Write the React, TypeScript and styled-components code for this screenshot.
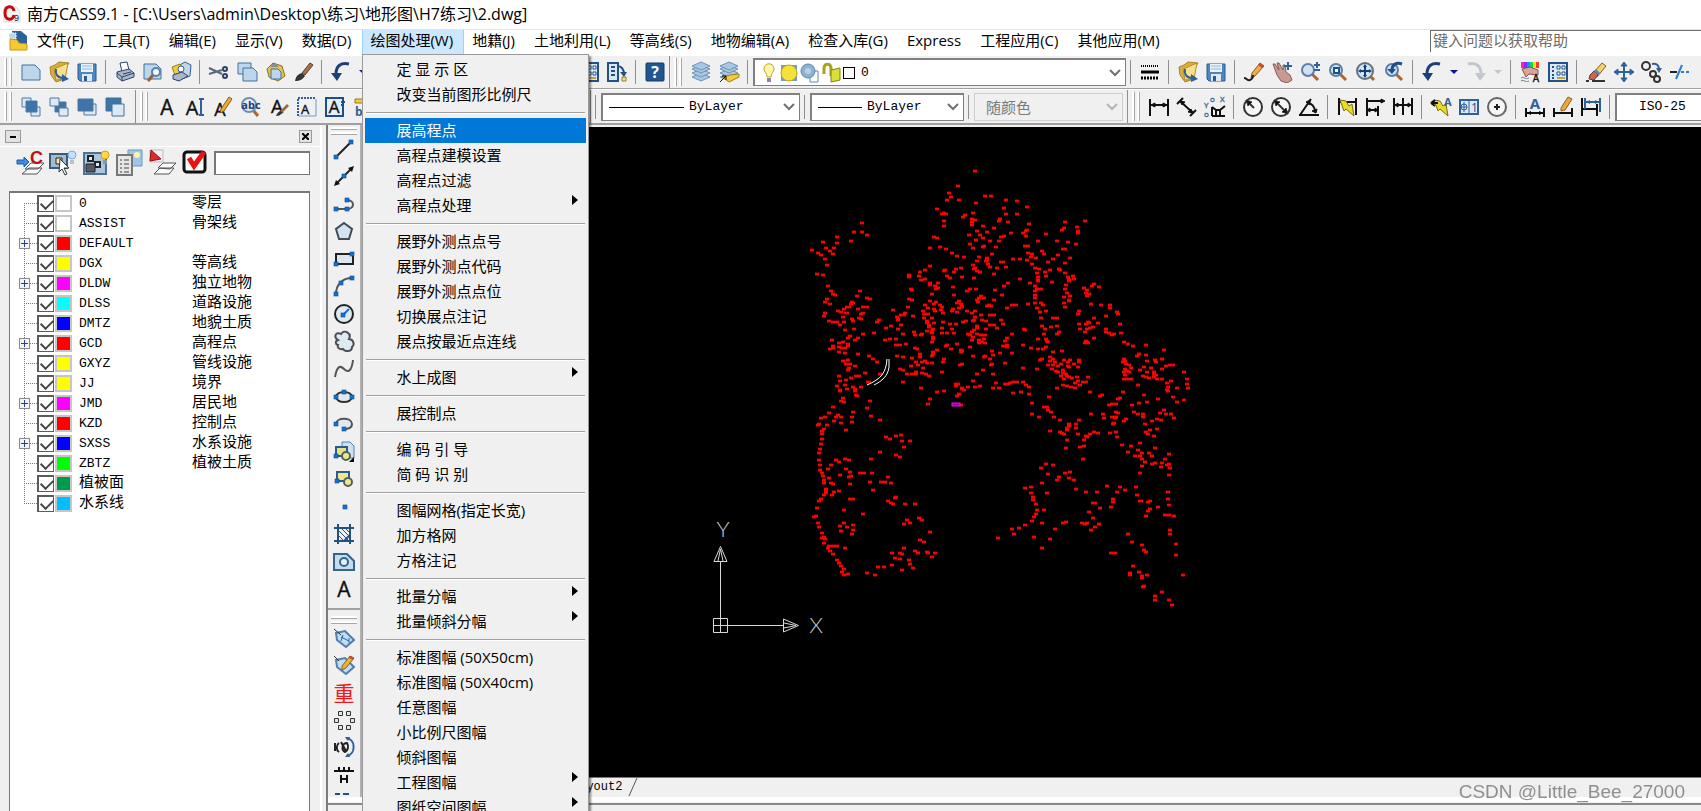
import React from 'react';
import styled, { createGlobalStyle } from 'styled-components';

const UI_FONT = '"Open Sans", "Noto Sans CJK SC", sans-serif';
const MONO_FONT = '"Liberation Mono", "Noto Sans CJK SC", monospace';

const GlobalStyle = createGlobalStyle`
  * { box-sizing: border-box; }
  html, body { margin: 0; padding: 0; overflow: hidden; }
  button, input, select { font: inherit; color: inherit; margin: 0; }
`;

/* ---------- icon drawings ---------- */

const INK = '#2d4266';
const BLUE = '#2f6099';
const PALE = '#bcd6ec';

const sheet = (
  <path d="M2 4h13l5 5v10H2z" fill={PALE} stroke="#41719f" />
);
const diskette = (
  <g>
    <path d="M2 3h18v17H4l-2-2z" fill="#4e86c0" stroke="#2c5b92" />
    <path d="M5 3h12v8H5z" fill="#eaf3fa" />
    <path d="M6 5h10M6 8h10" stroke="#8fb4d6" />
    <path d="M6 13h10v7H6z" fill="#dfe9f2" />
    <path d="M8 15h3v5H8z" fill="#2c5b92" />
  </g>
);
const folder = (
  <g>
    <path d="M2 6l5-2 4-3 10 1-2 3-5 14-6 2-5-7z" fill="#d9ae3c" stroke="#a9822a" />
    <path d="M6 8l14-6-3 16-9 1z" fill="#f8e08a" stroke="#b68d2c" />
    <path d="M8 8c-1 6 2 9 8 9" fill="none" stroke={BLUE} strokeWidth="2" />
    <path d="M14 13l7 5-7 3z" fill={BLUE} />
  </g>
);
const lens = (
  <g>
    <path d="M13 13l6 6" stroke="#b2642a" strokeWidth="3" />
    <circle cx="9" cy="9" r="6" fill="#cfe2f4" stroke="#5c7fa6" strokeWidth="2" />
  </g>
);
const undo = (
  <g>
    <path d="M19 3C11 1 6 5 6 13" fill="none" stroke="#1d3f78" strokeWidth="3" />
    <path d="M1 12h11l-5 8z" fill="#1d3f78" />
  </g>
);
const redo = (
  <g>
    <path d="M3 3c8-2 13 2 13 10" fill="none" stroke="#c3c7cc" strokeWidth="3" />
    <path d="M10 12h11l-6 8z" fill="#c3c7cc" />
  </g>
);
const stack = (
  <g stroke="#6d93b8" fill="#a9c6e2">
    <path d="M2 16l9-4 9 4-9 4z" />
    <path d="M2 12l9-4 9 4-9 4z" />
    <path d="M2 8l9-4 9 4-9 4z" />
    <path d="M2 5l9-4 9 4-9 4z" />
  </g>
);
const pencil = (
  <g>
    <path d="M9 12L17 2l4 3-9 10-4 2z" fill="#f0a94b" stroke="#8f5a20" />
    <path d="M17 2l4 3-2 2-4-3z" fill="#c64a36" />
  </g>
);
const bolt = <path d="M4 4l6 1 3 5 3-2 2 12-8-7-2 2z" fill="#e8dc29" stroke="#746d11" />;
const calcPad = (
  <g>
    <path d="M2 2h18v18H2z" fill="#d8e8f5" stroke="#245083" strokeWidth="2" />
    <path d="M5 6h2M5 10h2M5 14h2M5 17h2" stroke="#245083" strokeWidth="2" />
    <path d="M10 5h3v3h-3zM15 5h3v3h-3zM10 11h3v3h-3zM15 11h3v3h-3z" fill="#fff" stroke="#245083" />
    <path d="M10 17h8" stroke="#caa42e" strokeWidth="2" />
  </g>
);
const letterA = (size: number, x = 11, y = 19) => (
  <text x={x} y={y} textAnchor="middle" fontSize={size} fontFamily="Open Sans, sans-serif" fill="#111" stroke="#111" strokeWidth=".4">A</text>
);
const node = (x: number, y: number) => (
  <rect key={`${x}-${y}`} x={x - 2} y={y - 2} width="4" height="4" fill="#1173cf" stroke="#0b4d92" strokeWidth=".6" />
);
const twoSquares = (frontFill: string, backFill: string, flip: boolean) => (
  <g stroke="#41719f">
    <path d={flip ? 'M2 2h15v13H2z' : 'M2 2h10v10H2z'} fill={backFill} />
    <path d={flip ? 'M8 8h12v12H8z' : 'M6 6h11v11H6z'} fill={frontFill} />
  </g>
);

const icons: Record<string, React.ReactNode> = {
  sheet,
  diskette,
  folder,
  undo,
  redo,
  printer: (
    <g stroke={INK}>
      <path d="M6 2l7-1 2 8-7 2z" fill="#fff" />
      <path d="M3 11l12-3 5 4v4l-12 4-5-4z" fill="#a9b7cb" />
      <path d="M3 12l5 4 12-4M8 16v4" fill="none" />
      <path d="M9 13l8-2" />
    </g>
  ),
  preview: (
    <g>
      <path d="M2 3h12l5 5v10H2z" fill={PALE} stroke="#41719f" />
      <path d="M11 14l-5 6" stroke="#a65b26" strokeWidth="3" />
      <circle cx="14" cy="11" r="4" fill="#f1f8fd" stroke="#5c7fa6" strokeWidth="2" />
    </g>
  ),
  publish: (
    <g>
      <path d="M8 5l7-4 6 3-1 11-8 3z" fill="#c3d6e8" stroke={BLUE} />
      <path d="M2 6l8-3 3 7-8 4z" fill="#f2cc3a" stroke="#9e7919" />
      <circle cx="11" cy="8" r="3" fill="#fff" stroke={BLUE} />
      <path d="M3 14l9-3 6 4-9 5-6-2z" fill="#a9b7cb" stroke={INK} />
    </g>
  ),
  scissors: (
    <g stroke={INK} fill="none" strokeWidth="2">
      <path d="M1 7l13 6M1 13l13-4" stroke="#59697d" />
      <circle cx="17" cy="8" r="2" />
      <circle cx="17" cy="15" r="2" />
    </g>
  ),
  copy: (
    <g fill={PALE} stroke="#41719f">
      <path d="M2 2h13v11H2z" />
      <path d="M7 7h10l4 4v9H7z" />
    </g>
  ),
  paste: (
    <g>
      <path d="M3 8l6-6 9 3 3 10-7 5-9-4z" fill="#e3c254" stroke="#8d6f22" />
      <path d="M7 3h6l1 3H7z" fill="#8d8d8d" />
      <path d="M7 8h7l3 3v7H7z" fill={PALE} stroke="#41719f" />
    </g>
  ),
  brush: (
    <g>
      <path d="M10 12l8-10 3 2-8 10z" fill="#a6704b" stroke="#5d3c27" />
      <path d="M3 20c1-5 3-7 7-8l3 3c-2 3-5 5-10 5z" fill="#33333a" />
    </g>
  ),
  pad: calcPad,
  padDown: (
    <g>
      <path d="M2 2h10v18H2z" fill="#d8e8f5" stroke="#245083" strokeWidth="2" />
      <path d="M5 6h4M5 10h4M5 14h4" stroke="#245083" strokeWidth="2" />
      <path d="M11 5c5 0 7 3 7 9" fill="none" stroke="#245083" strokeWidth="2" />
      <path d="M14 11h7l-3 5z" fill="#245083" />
      <path d="M16 16h4v4h-4z" fill="#f5e18a" stroke="#9e7919" />
    </g>
  ),
  help: (
    <g>
      <rect x="2" y="2" width="18" height="18" rx="1" fill="#1f568f" stroke="#123a66" />
      <text x="11" y="17" textAnchor="middle" fontSize="16" fontWeight="700" fontFamily="Open Sans, sans-serif" fill="#fff">?</text>
    </g>
  ),
  layers: stack,
  layerPrev: (
    <g>
      {stack}
      <path d="M4 16l8-2 9-1v3l-10 5-4-3z" fill="#f0cc3b" stroke="#a37d1a" />
      <path d="M2 21l6-6M4 15h4v4" stroke="#111" fill="none" />
    </g>
  ),
  lineWeights: (
    <g stroke="#000">
      <path d="M2 5h18" strokeDasharray="1 1" strokeWidth="2" />
      <path d="M2 11h18" strokeWidth="3" />
      <path d="M2 17h18" strokeDasharray="2 1" strokeWidth="3" />
    </g>
  ),
  draw: (
    <g>
      {pencil}
      <path d="M1 17c3 0 3 3 6 2 3-1 3-3 3-5" fill="none" stroke="#222" strokeWidth="2" />
    </g>
  ),
  hand: (
    <g>
      <path d="M2 3l2 0 4 6-2-7 2 0 4 7 0-5 2 0 1 7 4 3 2 5-5 3-6-2-4-6z" fill="#c99a94" stroke="#8a5a57" />
      <path d="M17 1v8M13 5h8" stroke={BLUE} strokeWidth="2" />
    </g>
  ),
  zoomLive: (
    <g>
      {lens}
      <path d="M15 4h6M18 1v6M15 9h6" stroke={BLUE} strokeWidth="2" />
    </g>
  ),
  zoomWindow: (
    <g>
      {lens}
      <path d="M7 7h5v5H7z" fill="#fff" stroke="#1d4f8c" strokeWidth="2" />
    </g>
  ),
  zoomExtents: (
    <g>
      <path d="M14 14l5 5" stroke="#b2642a" strokeWidth="3" />
      <circle cx="10" cy="10" r="8" fill="#d4e3f1" stroke="#5f7284" strokeWidth="2" />
      <path d="M10 3l2 3h-4zM10 17l2-3h-4zM3 10l3-2v4zM17 10l-3-2v4z" fill="#123f78" />
      <path d="M10 5v10M5 10h10" stroke="#123f78" strokeWidth="2" />
    </g>
  ),
  zoomPrev: (
    <g>
      {lens}
      <path d="M19 3C13 1 9 4 9 9" fill="none" stroke="#1d4f8c" strokeWidth="3" />
      <path d="M4 8h9l-4 5z" fill="#1d4f8c" />
    </g>
  ),
  properties: (
    <g>
      <path d="M2 1h3v6H2z" fill="#ff1fb0" />
      <path d="M5 1h3v6H5z" fill="#8927ff" />
      <path d="M8 1h3v6H8z" fill="#1c8dff" />
      <path d="M11 1h3v6h-3z" fill="#13d84b" />
      <path d="M14 1h3v6h-3z" fill="#f2e21d" />
      <path d="M17 1h3v6h-3z" fill="#ff3b1d" />
      <path d="M3 8l8-2 8 3v5l-9-1-3 3z" fill="#d7a59a" stroke="#81564c" />
      <path d="M2 17c3-2 4 2 8 0M2 20c3-2 4 2 8 0" fill="none" stroke="#6d7f91" />
      {letterA(10, 17, 21)}
    </g>
  ),
  eraser: (
    <g>
      <path d="M8 12l9-10 4 3-9 11z" fill="#f3d368" stroke="#7c6220" />
      <path d="M5 14l4-4 4 4-4 5-5-1z" fill="#c46855" stroke="#733" />
      <path d="M10 9l4 4" stroke="#5e86b5" strokeWidth="3" />
      <path d="M1 20h3M7 20h13" stroke="#333" strokeWidth="2" />
    </g>
  ),
  move: (
    <g fill="#2f6099" stroke="#2f6099">
      <path d="M11 3v16M3 11h16" strokeWidth="2" />
      <path d="M11 1l3 4H8zM11 21l3-4H8zM1 11l4-3v6zM21 11l-4-3v6z" />
    </g>
  ),
  duplicate: (
    <g fill="none" stroke="#333" strokeWidth="2">
      <circle cx="5" cy="5" r="4" />
      <circle cx="12" cy="13" r="3" />
      <circle cx="16" cy="18" r="3" />
      <path d="M11 3c5-1 7 2 7 5" stroke={BLUE} />
      <path d="M15 7h6l-3 5z" fill={BLUE} stroke="none" />
    </g>
  ),
  trim: (
    <g fill="none">
      <path d="M1 11h7" stroke="#222" strokeWidth="2" />
      <path d="M7 18L13 4" stroke="#2b7fcf" strokeWidth="2" />
      <path d="M12 11h10" stroke="#2b7fcf" strokeWidth="2" strokeDasharray="3 2" />
    </g>
  ),
  orderFront: (
    <g stroke="#4d78a3">
      <path d="M2 2h9v9H2z" fill="#dbe9f5" />
      <path d="M11 11h9v9h-9z" fill="#dbe9f5" />
      <path d="M6 5h11v11H6z" fill="#3f74a9" />
    </g>
  ),
  orderBack: (
    <g stroke="#4d78a3">
      <path d="M7 6h11v10H7z" fill="#3f74a9" />
      <path d="M2 2h9v8H2z" fill="#dbe9f5" />
      <path d="M11 12h9v8h-9z" fill="#dbe9f5" />
    </g>
  ),
  orderAbove: (
    <g stroke="#4d78a3">
      <path d="M8 8h12v11H8z" fill="#dbe9f5" />
      <path d="M2 3h15v12H2z" fill="#3f74a9" />
    </g>
  ),
  orderUnder: twoSquares('#dbe9f5', '#3f74a9', true),
  textA: letterA(21),
  textCursor: (
    <g>
      {letterA(20, 8)}
      <path d="M15 3h5M15 19h5M17 3v16" stroke={BLUE} strokeWidth="2" fill="none" />
    </g>
  ),
  textEdit: (
    <g>
      {letterA(18, 8, 20)}
      <path d="M9 13L17 1l3 2-8 12-4 2z" fill="#eda93f" stroke="#8f5a20" />
    </g>
  ),
  textFind: (
    <g>
      <path d="M13 14l5 6" stroke="#b2642a" strokeWidth="3" />
      <circle cx="9" cy="9" r="7" fill="#e5effa" stroke="#7190b0" strokeWidth="2" />
      <text x="11" y="13" textAnchor="middle" fontSize="11" fontWeight="700" fontFamily="Open Sans, sans-serif" fill="#1d3f78">abc</text>
    </g>
  ),
  textStyle: (
    <g>
      {letterA(19, 9, 17)}
      <path d="M12 15l7-7 2 2-7 7z" fill="#9c6b40" />
      <path d="M8 20c1-3 3-5 5-5l1 2c-1 2-3 3-6 3z" fill="#333" />
    </g>
  ),
  textFrame: (
    <g>
      <path d="M2 20V2h18" fill="none" stroke={BLUE} strokeWidth="2" strokeDasharray="2 1" />
      <path d="M20 3v17H3" fill="none" stroke="#6f9bc4" />
      {letterA(13, 9, 18)}
    </g>
  ),
  textBlock: (
    <g>
      <rect x="2" y="2" width="17" height="18" fill="#e5effa" stroke="#1d4f8c" strokeWidth="2" />
      {letterA(17, 10, 17)}
      <path d="M17 6h4M17 9h3" stroke="#1d4f8c" strokeWidth="2" />
    </g>
  ),
  textStack: (
    <g>
      <path d="M3 3h14v4H3z" fill="#f2cc3a" stroke="#9e7919" />
      <text x="10" y="20" textAnchor="middle" fontSize="12" fontWeight="700" fontFamily="Open Sans, sans-serif" fill={BLUE}>bc</text>
    </g>
  ),
  dimLinear: (
    <g stroke="#111" fill="#111">
      <path d="M2 3v17M20 3v17" strokeWidth="2" />
      <path d="M3 9h16" strokeWidth="2" />
      <path d="M3 9l4-2v4zM19 9l-4-2v4z" />
    </g>
  ),
  dimAligned: (
    <g stroke="#111" fill="#111" strokeWidth="2">
      <path d="M1 8l6-6M14 20l6-6M4 5l13 12" />
      <path d="M4 5l5 1-3 3zM17 17l-5-1 3-3z" strokeWidth="1" />
    </g>
  ),
  dimOrdinate: (
    <g fill="none" stroke="#111">
      <path d="M8 20h13M8 11v9M8 11l4 3v6M12 14h4l5-4M16 14v6" strokeWidth="2" />
      <g fill={BLUE} stroke={BLUE} strokeWidth=".3" fontSize="8" fontFamily="Open Sans, sans-serif">
        <text x="0" y="12">Y</text>
        <text x="6" y="6">o</text>
        <text x="16" y="6">X</text>
        <text x="0" y="21">o</text>
      </g>
    </g>
  ),
  dimRadius: (
    <g stroke="#333" fill="none">
      <circle cx="11" cy="11" r="9" strokeWidth="2" fill="#f6f6f6" />
      <path d="M5 5l7 7" strokeWidth="2" />
      <path d="M4 4l6 2-4 4z" fill="#111" />
    </g>
  ),
  dimDiameter: (
    <g stroke="#333" fill="none">
      <circle cx="11" cy="11" r="9" strokeWidth="2" fill="#f6f6f6" />
      <path d="M5 5l12 12" strokeWidth="2" />
      <path d="M4 4l6 2-4 4zM18 18l-6-2 4-4z" fill="#111" />
    </g>
  ),
  dimAngle: (
    <g stroke="#111" fill="none" strokeWidth="2">
      <path d="M1 19h20M2 19L13 3M9 7c5 0 8 4 8 9" />
      <path d="M8 6l4-2v5zM18 17l-4-2 5-2z" fill="#111" strokeWidth="1" />
    </g>
  ),
  dimQuick: (
    <g>
      <path d="M3 2v17M20 2v17M3 6h17" stroke="#111" strokeWidth="2" />
      {bolt}
    </g>
  ),
  dimBaseline: (
    <g stroke="#111" fill="#111" strokeWidth="2">
      <path d="M3 2v18M14 10v10M3 5h17M3 14h11" />
      <path d="M17 3l4 2-4 2zM11 12l3 2-3 2zM6 12l-3 2 3 2z" strokeWidth="1" />
    </g>
  ),
  dimContinue: (
    <g stroke="#111" fill="#111" strokeWidth="2">
      <path d="M2 2v17M11 2v17M20 2v17M2 9h18" />
      <path d="M6 7l-3 2 3 2zM16 7l3 2-3 2z" strokeWidth="1" />
    </g>
  ),
  leader: (
    <g>
      {bolt}
      <path d="M1 7h7M1 7l4-3M1 7l4 3" stroke="#111" strokeWidth="2" fill="none" />
      <text x="14" y="10" fontSize="11" fontWeight="700" fontFamily="Open Sans, sans-serif" fill={BLUE}>A</text>
    </g>
  ),
  tolerance: (
    <g>
      <rect x="2" y="4" width="18" height="14" fill="#dceaf6" stroke={BLUE} strokeWidth="2" />
      <path d="M11 4v14M6 6v10M3 11h6" stroke={BLUE} />
      <circle cx="6" cy="11" r="3" fill="none" stroke={BLUE} />
      <text x="13" y="16" fontSize="12" fontFamily="Open Sans, sans-serif" fill="#1d4f8c">1</text>
    </g>
  ),
  centerMark: (
    <g stroke="#222" fill="none" strokeWidth="2">
      <circle cx="11" cy="11" r="9" stroke="#666" fill="#f6f6f6" />
      <path d="M11 8v6M8 11h6" />
    </g>
  ),
  dimTextA: (
    <g>
      <path d="M2 12v9M20 12v9M2 17h18" stroke="#111" strokeWidth="2" />
      <path d="M3 17l4-2v4zM19 17l-4-2v4z" />
      <text x="11" y="13" textAnchor="middle" fontSize="15" fontWeight="700" fontFamily="Open Sans, sans-serif" fill={BLUE}>A</text>
    </g>
  ),
  dimPencil: (
    <g>
      <path d="M2 12v9M20 12v9M2 17h18" stroke="#111" strokeWidth="2" />
      <path d="M9 12L16 1l4 2-7 11-4 1z" fill="#eda93f" stroke="#8f5a20" />
    </g>
  ),
  dimUpdate: (
    <g>
      <path d="M2 2v18M17 8v12M2 13h15" stroke="#111" strokeWidth="2" />
      <path d="M5 2v11M20 2v14M5 6h15" stroke={BLUE} strokeWidth="2" />
      <path d="M6 6l4-2v4zM19 6l-4-2v4z" fill={BLUE} />
    </g>
  ),
  line: (
    <g>
      <path d="M3 19L18 4" stroke="#222" strokeWidth="2" />
      {node(3, 19)}
      {node(18, 4)}
    </g>
  ),
  xline: (
    <g>
      <path d="M3 19L19 3" stroke="#222" strokeWidth="2" />
      <path d="M21 1l-2 6-4-4zM1 21l2-6 4 4z" fill="#111" />
      {node(11, 11)}
    </g>
  ),
  polyline: (
    <g>
      <path d="M3 16h11c8 0 8-9 0-9" fill="none" stroke="#555" strokeWidth="2" />
      {node(3, 16)}
      {node(14, 16)}
      {node(14, 7)}
    </g>
  ),
  polygon: <path d="M11 3l8 6-3 10H6L3 9z" fill="#d5e3ee" stroke="#3e4c58" strokeWidth="2" />,
  rectangle: (
    <g>
      <path d="M3 6h17v10H3z" fill="#dbe6f0" stroke="#222" strokeWidth="2" />
      {node(3, 16)}
      {node(19, 6)}
    </g>
  ),
  arc: (
    <g>
      <path d="M3 19C3 10 9 3 19 3" fill="none" stroke="#555" strokeWidth="2" />
      {node(3, 19)}
      {node(8, 8)}
      {node(19, 3)}
    </g>
  ),
  circle: (
    <g>
      <circle cx="11" cy="11" r="9" fill="#dfe9f2" stroke="#222" strokeWidth="2" />
      <path d="M11 11l5-5" stroke="#1173cf" strokeWidth="2" />
      {node(10, 12)}
    </g>
  ),
  cloud: (
    <path d="M5 10C0 7 3 1 8 4c3-5 11-1 8 5 6 1 5 7 3 8 0 5-7 5-9 2-4 1-6-2-5-4-3-1-3-4 0-5z" fill="#dfe9f2" stroke="#4a4f55" strokeWidth="2" />
  ),
  spline: <path d="M2 19C4 8 7 7 11 11c5 5 8 0 9-9" fill="none" stroke="#555" strokeWidth="2" />,
  ellipse: (
    <g>
      <ellipse cx="11" cy="11" rx="8" ry="5" fill="#dfe9f2" stroke="#333" strokeWidth="2" />
      {node(3, 11)}
      {node(19, 11)}
      {node(11, 6)}
    </g>
  ),
  ellipseArc: (
    <g>
      <path d="M3 11c0-7 16-7 16 0 0 4-4 5-8 5" fill="#dfe9f2" stroke="#555" strokeWidth="2" />
      {node(3, 11)}
      {node(11, 16)}
    </g>
  ),
  insertBlock: (
    <g>
      <path d="M9 1h8l4 4v12H9z" fill="#cfe2f4" stroke="#4f7fae" />
      <path d="M3 6h11v9H3z" fill="#e9df83" stroke="#2b5a8c" strokeWidth="2" />
      <circle cx="13" cy="15" r="4" fill="#f0e68c" stroke="#51615e" strokeWidth="2" />
      <path d="M21 16v5h-5z" fill="#000" />
      {node(3, 15)}
    </g>
  ),
  makeBlock: (
    <g>
      <path d="M4 4h12v9H4z" fill="#f0e68c" stroke="#2b5a8c" strokeWidth="2" />
      <circle cx="15" cy="14" r="4" fill="#f0e68c" stroke="#51615e" strokeWidth="2" />
      {node(4, 13)}
    </g>
  ),
  point: node(12, 11),
  hatch: (
    <g stroke="#24527f" strokeWidth="2" fill="none">
      <path d="M5 1v20M17 1v20M1 5h20M1 18h20" />
      <path d="M6 8l9 9M6 13l5 5M9 6l8 8M13 6l4 4" strokeWidth="1" />
      <path d="M11 18l6-6" />
    </g>
  ),
  region: (
    <g>
      <path d="M1 3h13l7 7v9H1z" fill="#c7dbed" stroke="#34658f" strokeWidth="2" />
      <circle cx="11" cy="11" r="4" fill="#e6f0f8" stroke="#34658f" strokeWidth="2" />
    </g>
  ),
  tag: (
    <g>
      <path d="M3 6l9-2 9 9-8 7-9-7z" fill="#c5dcf1" stroke="#4f7fae" strokeWidth="2" />
      <path d="M1 2l7 6" stroke="#333" />
      <path d="M8 10l8 4M10 8l-2 6M16 11v5" stroke="#1b64ac" fill="none" />
    </g>
  ),
  tagEdit: (
    <g>
      <path d="M3 6l9-2 9 9-8 7-9-7z" fill="#c5dcf1" stroke="#4f7fae" strokeWidth="2" />
      <path d="M1 2l5 5" stroke="#333" />
      <path d="M9 12L17 2l4 2-8 10-4 2z" fill="#e4b53b" stroke="#8f5a20" />
      <path d="M17 2l4 2-1 2-4-2z" fill="#c64a36" />
    </g>
  ),
  redWeight: (
    <text x="11" y="19" textAnchor="middle" fontSize="21" fontFamily="Noto Sans CJK SC, sans-serif" fill="#f01818">重</text>
  ),
  squares: (
    <g fill="#dfe9f2" stroke="#333">
      <path d="M5.500 2.500h4v4h-4zM13.500 2.500h4v4h-4zM1.500 9.500h4v4h-4zM17.500 9.500h4v4h-4zM5.500 16.500h4v4h-4zM13.500 16.500h4v4h-4z" />
    </g>
  ),
  rotateText: (
    <g fill="none">
      <path d="M13 2c10 1 10 16 1 18" stroke={BLUE} strokeWidth="2" />
      <path d="M12 1l5 0-2 4zM12 21l5 0-2-4z" fill={BLUE} />
      <path d="M2 7v8M6 7c-3 2-3 7 0 9M8 6l5 9M14 7c-5 0-6 7-2 9 3-1 4-6 2-9z" stroke="#222" strokeWidth="2" />
    </g>
  ),
  dimTicks: (
    <g stroke="#111" strokeWidth="2">
      <path d="M1 7h20M6 3v4M11 3v4M16 3v4M8 11v8M14 11v8M8 15h6" />
    </g>
  ),
  moreTicks: <path d="M2 3h5M10 3h6" stroke="#24527f" strokeWidth="2" />,
};

const panelIcons: Record<string, React.ReactNode> = {
  layerToC: (
    <g>
      <path d="M1 11h7V8l5 5-5 5v-3H1z" fill="#3d8ce0" stroke="#1d5ca6" />
      <path d="M6 25l7-6h13l-5 6zM9 20l6-6h13l-6 6z" fill="#fafafa" stroke="#555" />
      <text x="14" y="15" fontSize="18" fontWeight="700" fontFamily="Liberation Sans, sans-serif" fill="#c00d0d">C</text>
    </g>
  ),
  pickOn: (
    <g>
      <path d="M1 5h17v14H1z" fill="#9fbdd6" stroke="#3c5b78" strokeWidth="2" />
      <path d="M7 9h6v6H7z" fill="#ffe9a0" stroke="#222" />
      <circle cx="23" cy="6" r="4" fill="#c4e0ff" stroke="#7fa8da" />
      <path d="M21 11h4v4h-4z" fill="#b9c3cf" />
      <path d="M11 10l9 9h-5l3 6-2 1-3-6-3 3z" fill="#fff" stroke="#333" />
    </g>
  ),
  pickIsolate: (
    <g>
      <path d="M2 4h22v21H2z" fill="#a9c6dd" stroke="#51718c" strokeWidth="2" />
      <path d="M6 7h5v5H6zM13 13h5v5h-5z" fill="#dfe9f2" stroke="#222" strokeWidth="2" />
      <path d="M4 15h9v8H4z" fill="#555c66" stroke="#222" />
      <circle cx="23" cy="6" r="4" fill="#ffd943" stroke="#d69f17" />
      <path d="M21 11h4v4h-4z" fill="#8f959c" />
    </g>
  ),
  listView: (
    <g>
      <path d="M13 1h14v16H13z" fill="#9cc7ea" stroke="#6c97bd" />
      <circle cx="22" cy="6" r="3" fill="#fff2a3" />
      <path d="M2 6h15v20H2z" fill="#e6e6e6" stroke="#777" strokeWidth="2" />
      <path d="M5 11h2M9 11h5M5 15h2M9 15h5M5 19h2M9 19h5M5 23h2M9 23h5" stroke="#444" />
    </g>
  ),
  redLayer: (
    <g>
      <path d="M2 1h13v12H2z" fill="#f0f0f0" stroke="#bbb" />
      <path d="M3 1l10 9-11 2z" fill="#e02a2a" stroke="#941212" />
      <path d="M6 25l6-6h14l-5 6zM10 19l5-5h13l-6 6z" fill="#fafafa" stroke="#555" />
    </g>
  ),
  redCheck: (
    <g>
      <rect x="3" y="3" width="21" height="20" rx="3" fill="#fff" stroke="#111" strokeWidth="3" />
      <path d="M8 9l5 8L23 3" fill="none" stroke="#ec1111" strokeWidth="5" />
    </g>
  ),
};

/* ---------- shell ---------- */

const Shell = styled.div`
  display: flex;
  flex-direction: column;
  height: 100vh;
  overflow: hidden;
  background: #f0f0f0;
  color: #000;
  font: 15px/20px ${UI_FONT};
`;

const TitleBar = styled.header`
  flex: none;
  display: flex;
  align-items: center;
  gap: 6px;
  height: 29px;
  padding: 0 0 2px 3px;
  background: #fff;
`;

const TitleText = styled.h1`
  margin: 0;
  font-size: 16px;
  font-weight: 400;
  white-space: pre;
`;

const MenuBar = styled.nav`
  flex: none;
  display: flex;
  height: 26px;
  background: #fff;
  border-top: 1px solid #e4e4e4;
`;

const AppMark = styled.span`
  flex: none;
  width: 29px;
  padding: 0 0 0 8px;
`;

const MenuSlot = styled.div`
  position: relative;
  flex: none;
`;

const MenuTitle = styled.button<{ $open?: boolean }>`
  height: 24px;
  padding: 0 10px 4px 7px;
  border: ${(p) => (p.$open ? '1px solid #99d1ff' : '1px solid transparent')};
  border-width: 0 1px;
  background: ${(p) => (p.$open ? '#cce8ff' : 'transparent')};
  white-space: nowrap;
  line-height: 20px;
`;

const Dropdown = styled.ul`
  position: absolute;
  z-index: 10;
  top: 24px;
  left: 0;
  width: 227px;
  margin: 0;
  padding: 2px 2px 0;
  list-style: none;
  background: #f0f0f0;
  border: 1px solid #9a9a9a;
  box-shadow: 2px 2px 2px rgba(0, 0, 0, 0.45);
`;

const MenuEntry = styled.button<{ $active?: boolean }>`
  display: flex;
  justify-content: space-between;
  width: 100%;
  height: 25px;
  padding: 2px 8px 3px 31px;
  border: 0;
  background: ${(p) => (p.$active ? '#0078d7' : 'transparent')};
  color: ${(p) => (p.$active ? '#fff' : '#000')};
  white-space: pre;
  text-align: left;
`;

const MenuRule = styled.li`
  height: 11px;
  padding: 5px 1px 0;
  &::before {
    content: '';
    display: block;
    border-top: 1px solid #a0a0a0;
    border-bottom: 1px solid #fff;
  }
`;

const HelpBox = styled.input`
  width: 271px;
  height: 22px;
  margin-left: auto;
  padding: 0 2px 3px;
  border: solid #6d6d6d;
  border-width: 1px 0 0 1px;
  border-radius: 0;
  background: #fff;
  outline: 0;
  &::placeholder { color: #6d6d6d; opacity: 1; }
`;

/* ---------- toolbars ---------- */

const ToolRow = styled.div<{ $tall?: boolean }>`
  flex: none;
  display: flex;
  height: ${(p) => (p.$tall ? 36 : 34)}px;
  overflow: hidden;
  border-top: 1px solid #fff;
  border-bottom: ${(p) => (p.$tall ? 2 : 1)}px solid #a0a0a0;
`;

const ToolBar = styled.div<{ $width?: number; $last?: boolean }>`
  flex: none;
  display: flex;
  align-items: center;
  width: ${(p) => (p.$width ? `${p.$width}px` : 'auto')};
  overflow: hidden;
  border-right: ${(p) => (p.$last ? '0' : '1px solid #8e8e8e')};
`;

const Grip = styled.span`
  flex: none;
  align-self: stretch;
  width: 17px;
  padding: 2px 0 2px 4px;
  &::before {
    content: '';
    display: block;
    width: 8px;
    height: 100%;
    background: linear-gradient(90deg, #fff 2px, #a8a8a8 2px 3px, #f0f0f0 3px 5px, #fff 5px 7px, #a8a8a8 7px);
  }
`;

const Divider = styled.span`
  flex: none;
  width: 10px;
  height: 24px;
  border-left: 4px solid transparent;
  background: linear-gradient(90deg, #8e8e8e 1px, transparent 1px) padding-box;
`;

const ToolButton = styled.button`
  flex: none;
  display: grid;
  place-items: center;
  width: 28px;
  height: 28px;
  padding: 0;
  border: 0;
  background: transparent;
`;

const DropArrow = styled.button`
  flex: none;
  width: 16px;
  height: 24px;
  padding: 0;
  border: 0;
  background: transparent;
  display: grid;
  place-items: center;
`;

const Combo = styled.label<{ $width: number; $off?: boolean; $pad?: number }>`
  flex: none;
  display: flex;
  align-items: center;
  width: ${(p) => p.$width}px;
  height: 28px;
  padding: 0 4px 0 ${(p) => p.$pad ?? 6}px;
  border: ${(p) => (p.$off ? '1px solid #cfcfcf' : '2px solid #808080')};
  border-right-width: 1px;
  border-bottom-width: 1px;
  background: ${(p) => (p.$off ? '#f0f0f0' : '#fff')};
  color: ${(p) => (p.$off ? '#7a7a7a' : '#000')};
`;

const ComboSelect = styled.select<{ $mono?: boolean }>`
  flex: 1;
  min-width: 0;
  appearance: none;
  border: 0;
  padding: 0 5px;
  outline: 0;
  background: transparent;
  opacity: 1;
  color: inherit;
  font: ${(p) => (p.$mono ? `13px/20px ${MONO_FONT}` : `15px/20px ${UI_FONT}`)};
`;

const LineSample = styled.span<{ $width: number }>`
  flex: none;
  width: ${(p) => p.$width}px;
  border-top: 1px solid #000;
`;

/* ---------- work area ---------- */

const WorkArea = styled.div`
  flex: 1;
  display: flex;
  min-height: 0;
`;

const LayerPanel = styled.aside`
  flex: none;
  display: flex;
  flex-direction: column;
  width: 328px;
  border-right: 2px solid #7b7b7b;
`;

const LayerInner = styled.div`
  flex: 1;
  display: flex;
  flex-direction: column;
  min-height: 0;
  width: 322px;
  padding: 0 10px 0 9px;
  border-right: 2px solid #fff;
`;

const PanelHead = styled.div`
  flex: none;
  display: flex;
  justify-content: space-between;
  align-items: center;
  height: 22px;
  margin: 0 -10px 0 -9px;
  padding: 2px 8px 0 5px;
  border-bottom: 1px solid #fff;
`;

const HeadButton = styled.button<{ $width: number }>`
  display: grid;
  place-items: center;
  width: ${(p) => p.$width}px;
  height: 13px;
  padding: 0;
  border: 1px solid #9a9a9a;
  background: #e2e2e2;
`;

const PanelTools = styled.div`
  flex: none;
  display: flex;
  align-items: center;
  height: 44px;
  padding: 0 0 12px 7px;
  gap: 5px;
`;

const PanelButton = styled.button`
  flex: none;
  width: 28px;
  height: 28px;
  padding: 0;
  border: 0;
  background: transparent;
`;

const PanelInput = styled.input`
  flex: 1;
  min-width: 0;
  height: 24px;
  border: 2px solid #777;
  border-right-width: 1px;
  border-bottom-width: 1px;
  border-radius: 0;
  background: #fff;
`;

const Tree = styled.ul`
  flex: 1;
  min-height: 0;
  margin: 0;
  padding: 0;
  overflow: hidden;
  list-style: none;
  background: #fff;
  border: solid #777;
  border-width: 2px 1px 0;
`;

const TreeRow = styled.li`
  display: flex;
  align-items: center;
  height: 20px;
`;

const TreeLabel = styled.label`
  display: flex;
  align-items: center;
  height: 20px;
`;

const Tick = styled.input`
  position: relative;
  flex: none;
  appearance: none;
  width: 17px;
  height: 17px;
  border: 2px solid #5c5c5c;
  border-right-width: 1px;
  border-bottom-width: 1px;
  background: #fff;
  &:checked::after {
    content: '';
    position: absolute;
    left: 2px;
    top: 2px;
    width: 10px;
    height: 6px;
    border: solid #444;
    border-width: 0 0 2px 2px;
    transform: rotate(-45deg);
  }
`;

const Swatch = styled.span<{ $color: string }>`
  flex: none;
  width: 17px;
  height: 17px;
  margin: 0 7px 0 1px;
  border: 2px solid #c6c6c6;
  background: ${(p) => p.$color};
`;

const LayerName = styled.span<{ $cjk?: boolean }>`
  width: 113px;
  padding-top: 2px;
  font: ${(p) => (p.$cjk ? 15 : 13)}px/20px ${MONO_FONT};
`;

const LayerNote = styled.span`
  padding-top: 2px;
  font: 15px/20px ${MONO_FONT};
`;

const MainColumn = styled.main`
  flex: 1;
  min-width: 0;
  display: flex;
  flex-direction: column;
`;

const Stage = styled.div`
  flex: 1;
  min-height: 0;
  display: flex;
`;

const SideTools = styled.div`
  flex: none;
  display: flex;
  flex-direction: column;
  align-items: center;
  width: 36px;
  overflow: hidden;
  border-right: 4px solid #b0b0b0;
`;

const SideGrip = styled.span`
  flex: none;
  width: 26px;
  height: 8px;
  margin: 2px 0 0;
  background: linear-gradient(#fff 2px, #a8a8a8 2px 3px, #f0f0f0 3px 5px, #fff 5px 7px, #a8a8a8 7px);
`;

const SideGroup = styled.div<{ $height: number }>`
  flex: none;
  display: grid;
  grid-auto-rows: minmax(0, 1fr);
  place-items: center;
  width: 100%;
  height: ${(p) => p.$height}px;
`;

const SideRule = styled.span`
  flex: none;
  width: 100%;
  margin: 5px 0 4px;
  border-top: 2px solid #a0a0a0;
`;

const Viewport = styled.div`
  flex: 1;
  min-width: 0;
  display: flex;
  flex-direction: column;
`;

const Canvas = styled.div`
  flex: 1;
  min-height: 0;
  overflow: hidden;
  margin-top: 2px;
  background: #000;
`;

const TabStrip = styled.div`
  flex: none;
  display: flex;
  height: 20px;
  padding-left: 208px;
  border-top: 1px solid #777;
  font: 12px/19px ${MONO_FONT};
`;

const LayoutTab = styled.button`
  display: flex;
  align-items: center;
  gap: 6px;
  height: 18px;
  padding: 0;
  border: 0;
  background: transparent;
`;

const BottomEdge = styled.footer`
  flex: none;
  height: 14px;
  border-top: 5px solid #fff;
  &::before {
    content: '';
    display: block;
    margin-top: 1px;
    border-top: 2px solid #8a8a8a;
  }
`;

const Watermark = styled.span`
  position: fixed;
  right: 16px;
  bottom: 8px;
  font: 19px/22px "Liberation Sans", Arial, sans-serif;
  color: #8f8f8f;
`;

/* ---------- helpers ---------- */

const Glyph = ({ name }: { name: string }) => (
  <svg width="22" height="22" viewBox="0 0 22 22" aria-hidden="true">{icons[name]}</svg>
);

const Tool = ({ name }: { name: string }) => (
  <ToolButton type="button" aria-label={name}><Glyph name={name} /></ToolButton>
);

/* "|" is a divider, "v" and "w" are the enabled and disabled history arrows */
const Tools = ({ list }: { list: string }) => (
  <>
    {list.split(' ').map((n, i) => {
      if (n === '|') return <Divider key={i} />;
      if (n === 'v' || n === 'w') {
        return (
          <DropArrow key={i} type="button" aria-label="history" disabled={n === 'w'}>
            <svg width="8" height="4"><path d="M0 0h8l-4 4z" fill={n === 'v' ? '#10109a' : '#c3c7cc'} /></svg>
          </DropArrow>
        );
      }
      return <Tool key={i} name={n} />;
    })}
  </>
);

const Chevron = ({ color = '#707070' }: { color?: string }) => (
  <svg width="12" height="8" viewBox="0 0 12 8" aria-hidden="true">
    <path d="M1 1l5 5 5-5" fill="none" stroke={color} strokeWidth="2" />
  </svg>
);

const LayerState = () => (
  <svg width="86" height="22" viewBox="0 0 86 22" aria-hidden="true">
    <path d="M8 7c0-7 10-7 10 0 0 3-3 4-3 8h-4c0-4-3-5-3-8z" fill="#fff6a8" stroke="#c9a02b" />
    <path d="M11 16h4v4h-4z" fill="#8a8a9a" />
    <path d="M25 3h16v16H25z" fill="#6d9fc5" />
    <circle cx="33" cy="11" r="8" fill="#f4e13a" stroke="#c2a41b" />
    <path d="M54 9h8v11h-8z" fill="#fff" stroke="#5d86b0" />
    <circle cx="52" cy="9" r="7" fill="#8fb2d3" stroke="#5d86b0" />
    <circle cx="52" cy="9" r="3" fill="#b9d0e6" />
    <path d="M68 12V6c0-5 7-5 7 0v8" fill="none" stroke="#a5a51a" strokeWidth="3" />
    <path d="M75 8l9-2v12l-9 2z" fill="#d9df34" stroke="#7f8313" />
  </svg>
);

/* ---------- data ---------- */

type Layer = { name: string; note?: string; color: string; group?: boolean };

const layers: Layer[] = [
  { name: '0', note: '零层', color: '#ffffff' },
  { name: 'ASSIST', note: '骨架线', color: '#ffffff' },
  { name: 'DEFAULT', color: '#ff0000', group: true },
  { name: 'DGX', note: '等高线', color: '#ffff00' },
  { name: 'DLDW', note: '独立地物', color: '#ff00ff', group: true },
  { name: 'DLSS', note: '道路设施', color: '#00ffff' },
  { name: 'DMTZ', note: '地貌土质', color: '#0000ff' },
  { name: 'GCD', note: '高程点', color: '#ff0000', group: true },
  { name: 'GXYZ', note: '管线设施', color: '#ffff00' },
  { name: 'JJ', note: '境界', color: '#ffff00' },
  { name: 'JMD', note: '居民地', color: '#ff00ff', group: true },
  { name: 'KZD', note: '控制点', color: '#ff0000' },
  { name: 'SXSS', note: '水系设施', color: '#0000ff', group: true },
  { name: 'ZBTZ', note: '植被土质', color: '#00ff00' },
  { name: '植被面', color: '#009a4e' },
  { name: '水系线', color: '#00bfff' },
];

const menusBefore = ['文件(F)', '工具(T)', '编辑(E)', '显示(V)', '数据(D)'];
const menusAfter = ['地籍(J)', '土地利用(L)', '等高线(S)', '地物编辑(A)', '检查入库(G)', 'Express', '工程应用(C)', '其他应用(M)'];

/* "-" draws a rule, a trailing ">" marks a submenu */
const drawingMenu = [
  '定 显 示 区', '改变当前图形比例尺', '-',
  '展高程点', '高程点建模设置', '高程点过滤', '高程点处理>', '-',
  '展野外测点点号', '展野外测点代码', '展野外测点点位', '切换展点注记', '展点按最近点连线', '-',
  '水上成图>', '-', '展控制点', '-', '编 码 引 导', '简 码 识 别', '-',
  '图幅网格(指定长宽)', '加方格网', '方格注记', '-',
  '批量分幅>', '批量倾斜分幅>', '-',
  '标准图幅 (50X50cm)', '标准图幅 (50X40cm)', '任意图幅', '小比例尺图幅', '倾斜图幅', '工程图幅>', '图纸空间图幅>',
];

/* elevation points as x,y pairs, three drawing units to a pixel */
const northPoints = `
556,34 504,77 476,100 483,112 470,119 506,119 585,109 603,107 647,121 681,122 558,130 712,141 642,143 442,146 461,160 550,158 647,162 680,162 467,163 455,162
518,170 526,166 545,178 630,178 556,181 545,186 463,184 654,186 627,184 885,182 825,186 217,188 462,197 718,193 578,199 547,194 613,205 560,212 822,203 817,209
861,202 863,212 710,211 698,218 662,218 592,216 192,217 217,217 708,214 769,222 865,220 230,226 538,225 571,226 708,228 641,227 432,231 140,231 579,233 633,232
440,234 184,244 99,247 142,250 557,240 601,242 628,244 743,244 800,244 833,247 859,252 420,264 450,260 583,258 578,260 549,264 618,260 706,257 713,257 109,264
132,263 825,267 65,271 120,272 467,267 539,253 755,272 820,268 715,279 762,282 727,283 85,279 129,281 93,286 485,279 605,281 803,285 104,297 500,288 521,292
568,290 590,293 592,300 589,303 668,297 691,297 711,300 737,294 788,296 840,295 722,290 774,305 825,308 632,305 562,302 111,314 725,312 640,307 421,317 550,316
600,322 554,323 552,328 648,322 497,327 513,325 465,329 404,329 735,325 806,327 747,328 594,312 620,324 779,331 810,331 560,332 571,336 463,334 493,336 82,341
99,344 613,342 390,337 386,347 740,339 765,336 824,339 356,345 356,352 471,348 517,351 553,355 479,354 744,350 769,348 833,352 850,347 404,357 690,357 745,360
393,361 838,356 853,358 744,364 421,369 421,374 443,370 445,384 653,368 721,369 785,365 827,375 838,364 113,378 434,377 488,380 735,379 911,372 905,378 926,381
641,378 881,384 740,386 754,387 824,388 362,387 367,391 124,393 209,393 615,391 530,394 540,388 557,388 437,386 735,393 891,391 830,398 426,402 130,402 134,406
735,404 889,400 897,402 492,404 574,409 637,406 890,407 200,409 736,413 840,408 823,410 232,413 241,417 111,417 568,413 583,415 358,418 365,421 105,425 186,425
420,423 560,421 611,421 838,420 508,422 500,429 512,432 564,427 736,430 838,424 823,428 714,433 754,430 760,436 120,433 437,427 183,433 190,430 404,434 433,433
667,436 679,435 597,435 517,438 590,438 604,437 824,442 741,443 902,431 932,434 960,436 960,443 451,436 171,441 177,440 456,441 220,441 230,441 354,442 508,444
516,441 414,444 651,444 163,447 204,447 433,447 398,452 454,451 486,452 489,448 310,451 144,454 152,457 170,458 749,455 768,454 434,453 556,452 530,454 500,455
980,457 866,454 344,459 168,460 219,460 214,463 104,458 401,462 414,463 458,459 547,460 343,465 865,462 983,462 101,468 332,466 368,469 573,466 600,466 612,466
947,469 322,472 206,474 555,472 754,474 788,474 800,474 912,473 158,471 187,477 214,477 324,476 401,474 412,482 425,473 552,480 633,481 325,480 267,481 116,483
189,483 130,486 142,485 163,485 262,486 410,489 432,489 460,487 518,485 529,483 549,484 577,481 587,482 893,487 889,492 896,490 923,489 990,493 151,496 416,496
480,491 498,491 334,496 599,496 613,494 560,498 868,493 755,498 782,500 800,498 302,499 192,506 289,504 417,502 429,507 455,504 486,506 560,505 589,506 622,505
640,492 909,500 900,504 325,507 869,506 892,508 948,508 165,511 702,507 704,511 764,506 552,511 371,516 410,514 425,514 884,516 947,516 545,516 219,522 252,518
395,521 338,521 455,519 472,519 493,520 394,526 427,519 666,522 808,517 761,522 800,522 561,521 573,526 956,520 972,521 966,525 994,520 534,523 541,526 375,525
586,525 180,527 174,533 203,533 429,532 430,536 549,532 650,533 767,537 913,534 196,541 126,541 285,541 299,537 319,536 427,545 546,539 567,541 583,536 575,546
644,543 744,538 887,542 890,547 770,543 773,547 885,550 895,550 160,546 148,549 1001,546 1014,551 585,548 567,549 173,552 175,557 501,553 472,555 349,552 319,554
329,556 650,555 645,559 638,559 699,556 1067,556 1030,558 468,558 128,559 147,562 129,564 157,565 165,564 120,567 540,562 651,562 724,564 744,567 769,562 758,567
374,564 380,567 1121,569 440,571 428,575 482,567 513,570 517,574 667,578 148,577 165,580 816,574 790,577 607,573 629,578 203,582 428,583 391,583 427,587 610,585
585,588 549,589 514,576 237,587 320,589 338,591 389,590 367,593 581,592 600,596 756,597 781,592 788,597 751,600 779,602 250,596 1048,583 1069,586 1041,588 158,604
174,601 262,606 462,597 459,605 404,604 396,607 379,606 412,609 425,609 516,612 510,615 646,608 606,611 821,600 834,605 840,600 866,600 868,606 1001,598 1005,603
1000,606 1070,604 1094,600 1117,598 1097,607 1009,611 795,606 812,612 851,611 169,611 180,613 604,614 803,618 790,615 774,615 833,618 865,620 838,622 1018,614
1140,615 1128,618 195,619 178,624 362,617 385,614 400,624 330,627 338,629 698,624 742,627 1005,626 1023,625 1050,629 1061,620 1084,624 1115,628 1150,615 173,629
786,628 797,632 804,635 818,631 1010,633 225,638 457,635 379,637 379,642 395,640 409,642 352,643 417,648 580,630 608,642 820,640 827,643 831,649 1002,637 1018,636
1070,636 1091,636 1182,635 1092,642 207,647 198,647 270,643 367,643 562,643 813,649 836,650 860,651 845,655 823,657 147,648 183,655 1005,646 1022,657 1010,658
1003,657 1059,647 1068,650 1093,650 1097,645 167,661 149,662 893,651 1077,653 1100,656 1115,656 1143,662 236,665 234,666 340,667 549,663 497,671 505,672 670,665
661,669 680,667 698,667 645,672 618,668 655,671 864,663 878,665 888,665 855,668 1192,657 1192,671 1132,668 141,677 189,680 165,674 212,680 498,678 517,683 533,680
571,679 871,674 707,676 820,674 832,677 844,680 801,684 393,684 609,684 628,685 1193,685 1162,684 1045,676 1135,680 170,688 195,688 150,689 515,686 522,689 555,681
717,681 856,684 1131,690`;

const southPoints = `
150,3 195,3 198,14 200,19 440,5 462,3 507,11 502,17 420,26 414,43 513,46 669,9 694,7 718,12 778,22 901,5 935,14 930,17 999,5 990,24 984,28 1061,16 1133,3
1149,20 1182,31 1162,37 1104,28 965,42 958,46 977,42 1025,46 1048,39 1070,37 725,39 159,24 154,32 162,35 240,33 129,50 230,54 770,50 774,61 783,65 763,50 118,69
190,66 727,73 792,80 748,82 811,91 902,73 940,71 978,66 985,69 1032,65 1043,71 1058,73 1111,69 1122,60 1142,73 1127,73 1059,81 94,85 104,82 139,80 144,76 153,80
187,82 243,78 271,91 966,82 978,80 943,85 975,85 1009,87 1003,93 1101,87 1086,93 1114,91 1151,84 83,105 87,102 112,104 131,93 153,99 185,97 868,91 836,103
838,107 858,102 831,114 857,115 831,121 811,126 815,128 822,132 973,98 970,102 1066,102 1102,118 1080,119 101,116 97,124 95,132 167,121 780,123 864,132 901,132
913,127 923,129 890,140 883,149 830,149 889,137 961,130 977,127 980,141 1067,127 1073,132 1092,138 95,147 92,162 91,178 88,188 289,142 301,148 317,138 333,134
335,152 361,153 341,172 317,194 331,202 271,185 829,174 870,170 882,167 879,208 995,166 1024,167 1014,185 1044,181 1049,160 1096,174 1035,198 1049,198 1057,190
1078,190 1087,198 1137,192 1055,208 1065,215 1095,218 1085,223 1116,218 1126,208 1131,226 1138,223 1140,234 1112,230 1056,228 1050,249 1136,254 88,211 90,226
90,240 95,249 98,257 139,211 148,215 165,207 178,209 124,226 114,238 167,238 180,247 150,254 183,259 176,262 244,206 209,249 222,249 245,249 117,264 102,271
103,279 124,280 128,283 181,283 240,275 274,275 284,275 293,260 302,279 249,300 108,296 107,303 109,309 103,316 126,316 133,306 147,303 93,326 86,332 180,328
190,326 318,320 315,325 295,332 302,338 309,342 346,341 376,342 81,353 162,361 219,371 78,377 73,380 83,398 88,410 163,398 150,408 171,410 189,406 152,423
189,421 187,433 352,390 343,403 361,399 386,384 395,391 420,425 95,428 101,441 97,444 106,447 103,458 116,468 130,469 140,469 115,474 121,484 128,493 140,511
146,520 152,528 162,538 157,547 162,556 173,552 166,474 341,474 391,451 403,455 306,489 329,489 335,492 376,484 384,489 411,485 413,490 434,490 427,501 314,505
330,508 358,510 361,523 369,534 263,530 283,530 305,526 335,541 230,549 256,556
754,234 768,221 789,225 774,253 808,262 800,271 824,250 839,247 838,265 851,271 859,297 755,279 770,309 706,295 723,292 722,310 729,320 729,329 737,341 741,359
761,359 738,371 733,382 725,393 704,405 687,414 665,417 672,433 623,444 733,442 755,399 781,448 757,474 796,417 820,398 827,395 888,307 920,305 951,289 991,290
980,307 1006,301 1039,290 1040,316 969,327 969,337 963,350 908,340 914,340 929,353 898,365 908,384 877,399 892,399 885,403 915,410 928,401 904,420 1051,333
1054,332 1074,337 1080,332 1081,357 1075,363 1068,378 1104,352 1134,305 1134,327 1137,344 1125,374 1137,374 1153,377 1141,420 1141,433 1157,461 1159,496 1013,433
1025,455 1057,464 1062,481 1069,487 963,490 974,489 1029,528 1020,548 1020,556 1047,546 1056,557 1071,556 1057,563 1062,587 1058,590 1180,556 1117,607 1094,619
1094,630 1138,630 1145,645`;

const pointPath = (source: string, top: number) =>
  source.trim().split(/\s+/).map((pair) => {
    const [x, y] = pair.split(',').map(Number);
    return `M${Math.round(x / 3) - 2} ${Math.round(y / 3) + top}h4`;
  }).join('');

const pointsPath = pointPath(northPoints, 0) + pointPath(southPoints, 230);

const Drawing = () => (
  <svg width="1337" height="650" viewBox="0 0 1337 650" role="img" aria-label="高程点">
    <g transform="translate(426 33)" fill="none">
      <path d={pointsPath} stroke="#c00000" strokeWidth="3" />
      <path d={pointsPath} stroke="#ff0000" strokeWidth="2" />
      <path d="M99 199v8c-1 9-7 14-15 18M97 199c-1 14-6 20-20 26" stroke="#fff" />
      <rect x="162" y="243" width="8" height="3" fill="#900090" stroke="#ff00ff" />
    </g>
    <g fill="none" stroke="#d8d8d8">
      <path d="M349.500 491.500h14v14h-14zM356.500 435v70M349 498.500h71" />
      <path d="M350 434.500h13l-6.500-15zM354 434l2.500-12 2.500 12M419.500 492v13l15-6.500zM420 496l12 2.500-12 2.500" />
    </g>
    <g fill="#c8c8c8" fontFamily="Lato, sans-serif" fontWeight="300" fontSize="22" textAnchor="middle">
      <text x="359" y="410">Y</text>
      <text x="452" y="506">X</text>
    </g>
  </svg>
);

const TreeGutter = ({ layer, first, last }: { layer: Layer; first: boolean; last: boolean }) => (
  <svg width="27" height="20" viewBox="0 0 27 20" aria-hidden="true">
    <path d={`M14.500 ${first ? 10 : 0}V${last ? 10 : 20}M14 10.500h13`} stroke="#777" strokeDasharray="1 1" fill="none" />
    {layer.group && (
      <g>
        <rect x="9.500" y="5.500" width="10" height="10" fill="#f4f4f4" stroke="#8b8b8b" />
        <path d="M11 10.500h7M14.500 7v7" stroke="#23409a" />
      </g>
    )}
  </svg>
);

export default function App() {
  return (
    <Shell>
      <GlobalStyle />
      <TitleBar>
        <svg width="18" height="20" viewBox="0 0 18 20" aria-hidden="true">
          <path d="M1 3h12l4 4v11H1z" fill="#f2f2f2" stroke="#ddd" />
          <path d="M11 7C10 1 2 1 2 9s8 8 9 2" fill="none" stroke="#c00d0d" strokeWidth="3" />
          <text x="11" y="17" fontSize="9" fontFamily="Liberation Sans, sans-serif" fill="#222">9</text>
        </svg>
        <TitleText>{'南方CASS9.1 - [C:\\Users\\admin\\Desktop\\练习\\地形图\\H7练习\\2.dwg]'}</TitleText>
      </TitleBar>

      <MenuBar>
        <AppMark>
          <svg width="20" height="22" viewBox="0 0 20 22" aria-hidden="true">
            <path d="M4 1h9l6 5v14H4z" fill="#2d6199" />
            <path d="M1 3h7v6H1z" fill="#bcd6ec" stroke="#fff" strokeDasharray="2 1" />
            <path d="M2 9l7 1 2 3 8 1v6H2z" fill="#f5c932" stroke="#c9971d" />
          </svg>
        </AppMark>
        {menusBefore.map((m) => <MenuTitle key={m} type="button">{m}</MenuTitle>)}
        <MenuSlot>
          <MenuTitle type="button" $open aria-expanded="true">绘图处理(W)</MenuTitle>
          <Dropdown>
            {drawingMenu.map((entry, i) => {
              if (entry === '-') return <MenuRule key={i} />;
              const sub = entry.endsWith('>');
              return (
                <li key={i}>
                  <MenuEntry type="button" $active={entry === '展高程点'}>
                    {sub ? entry.slice(0, -1) : entry}
                    {sub && <svg width="6" height="10" aria-hidden="true"><path d="M0 0v10l6-5z" fill="#000" /></svg>}
                  </MenuEntry>
                </li>
              );
            })}
          </Dropdown>
        </MenuSlot>
        {menusAfter.map((m) => <MenuTitle key={m} type="button">{m}</MenuTitle>)}
        <HelpBox type="text" aria-label="帮助" placeholder="键入问题以获取帮助" />
      </MenuBar>

      <ToolRow>
        <ToolBar>
          <Grip />
          <Tools list="sheet folder diskette | printer preview publish | scissors copy paste brush | undo v redo w | hand zoomLive zoomWindow | pad pad pad padDown | help" />
        </ToolBar>
        <ToolBar $last>
          <Grip />
          <Tools list="layers layerPrev |" />
          <Combo $width={373} $pad={1}>
            <LayerState />
            <svg width="14" height="14" aria-hidden="true"><rect x="1.500" y="1.500" width="11" height="11" fill="#fff" stroke="#000" /></svg>
            <ComboSelect $mono aria-label="图层"><option>0</option></ComboSelect>
            <Chevron />
          </Combo>
          <Tools list="| lineWeights | folder diskette | draw hand zoomLive zoomWindow zoomExtents zoomPrev | undo v redo w | properties pad | eraser move duplicate trim" />
        </ToolBar>
      </ToolRow>

      <ToolRow $tall>
        <ToolBar $width={136}>
          <Grip />
          <Tools list="orderFront orderBack orderAbove orderUnder" />
        </ToolBar>
        <ToolBar $width={455}>
          <Grip />
          <Tools list="textA textCursor textEdit textFind textStyle textFrame textBlock textStack" />
        </ToolBar>
        <ToolBar $width={537}>
          <Divider />
          <Combo $width={199}>
            <LineSample $width={75} />
            <ComboSelect $mono aria-label="线型"><option>ByLayer</option></ComboSelect>
            <Chevron />
          </Combo>
          <Divider />
          <Combo $width={154}>
            <LineSample $width={44} />
            <ComboSelect $mono aria-label="线宽"><option>ByLayer</option></ComboSelect>
            <Chevron />
          </Combo>
          <Divider />
          <Combo $width={149} $off>
            <ComboSelect aria-label="打印样式"><option>随颜色</option></ComboSelect>
            <Chevron color="#b5b5b5" />
          </Combo>
        </ToolBar>
        <ToolBar $last>
          <Grip />
          <Tools list="dimLinear dimAligned dimOrdinate | dimRadius dimDiameter dimAngle | dimQuick dimBaseline dimContinue | leader tolerance centerMark | dimTextA dimPencil dimUpdate |" />
          <Combo $width={140} $pad={17}>
            <ComboSelect $mono aria-label="标注样式"><option>ISO-25</option></ComboSelect>
          </Combo>
        </ToolBar>
      </ToolRow>

      <WorkArea>
        <LayerPanel>
          <LayerInner>
            <PanelHead>
              <HeadButton type="button" $width={16} aria-label="折叠">
                <svg width="6" height="2"><path d="M0 1h6" stroke="#000" strokeWidth="2" /></svg>
              </HeadButton>
              <HeadButton type="button" $width={13} aria-label="关闭">
                <svg width="7" height="7" viewBox="0 0 7 7"><path d="M0 0l7 7M7 0L0 7" stroke="#000" strokeWidth="2" /></svg>
              </HeadButton>
            </PanelHead>
            <PanelTools>
              {Object.keys(panelIcons).map((n) => (
                <PanelButton key={n} type="button" aria-label={n}>
                  <svg width="28" height="28" viewBox="0 0 28 28" aria-hidden="true">{panelIcons[n]}</svg>
                </PanelButton>
              ))}
              <PanelInput type="text" aria-label="图层过滤" />
            </PanelTools>
            <Tree>
              {layers.map((l, i) => (
                <TreeRow key={l.name}>
                  <TreeGutter layer={l} first={i === 0} last={i === layers.length - 1} />
                  <TreeLabel>
                    <Tick type="checkbox" defaultChecked />
                    <Swatch $color={l.color} />
                    <LayerName $cjk={!/^[\w]+$/.test(l.name)}>{l.name}</LayerName>
                    <LayerNote>{l.note}</LayerNote>
                  </TreeLabel>
                </TreeRow>
              ))}
            </Tree>
          </LayerInner>
        </LayerPanel>

        <MainColumn>
          <Stage>
            <SideTools>
              <SideGrip />
              <SideGroup $height={468}>
                {['line', 'xline', 'polyline', 'polygon', 'rectangle', 'arc', 'circle', 'cloud', 'spline', 'ellipse', 'ellipseArc', 'insertBlock', 'makeBlock', 'point', 'hatch', 'region', 'textA'].map((n) => <Tool key={n} name={n} />)}
              </SideGroup>
              <SideRule />
              <SideGrip />
              <SideGroup $height={192}>
                {['tag', 'tagEdit', 'redWeight', 'squares', 'rotateText', 'dimTicks', 'moreTicks'].map((n) => <Tool key={n} name={n} />)}
              </SideGroup>
            </SideTools>
            <Viewport>
              <Canvas><Drawing /></Canvas>
              <TabStrip>
                <LayoutTab type="button">
                  <span>Layout2</span>
                  <svg width="10" height="18" viewBox="0 0 10 18" aria-hidden="true"><path d="M1 18L9 0" stroke="#555" fill="none" /></svg>
                </LayoutTab>
              </TabStrip>
            </Viewport>
          </Stage>
          <BottomEdge />
        </MainColumn>
      </WorkArea>
      <Watermark>CSDN @Little_Bee_27000</Watermark>
    </Shell>
  );
}
